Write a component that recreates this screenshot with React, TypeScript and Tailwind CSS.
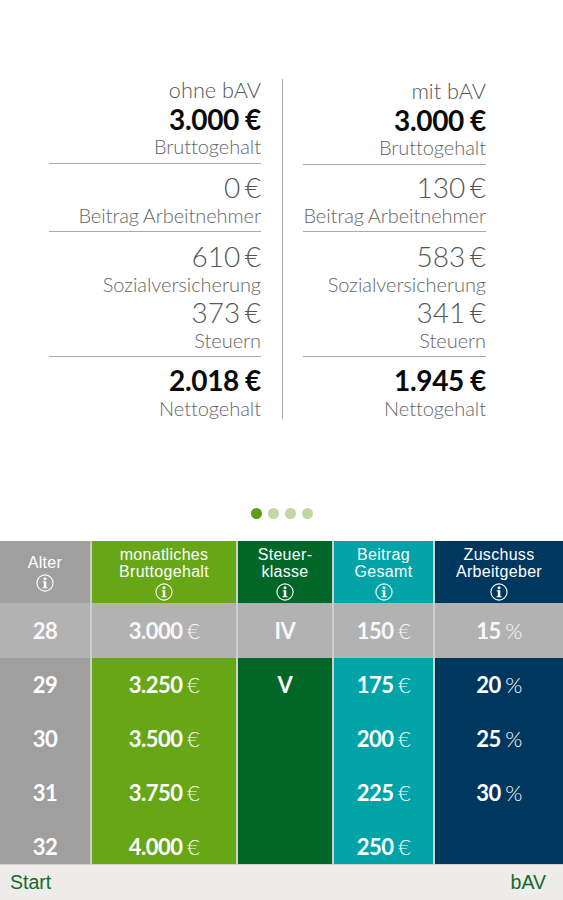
interface SalaryLine {
  amount: string;
  label: string;
}

interface Column {
  title: string[];
  unit?: string;
  values: string[];
  color: string;
  titlePadding: string;
}

const withoutBav: SalaryLine[] = [
  { amount: '3.000 €', label: 'Bruttogehalt' },
  { amount: '0 €', label: 'Beitrag Arbeitnehmer' },
  { amount: '610 €', label: 'Sozialversicherung' },
  { amount: '373 €', label: 'Steuern' },
  { amount: '2.018 €', label: 'Nettogehalt' },
];

const withBav: SalaryLine[] = [
  { amount: '3.000 €', label: 'Bruttogehalt' },
  { amount: '130 €', label: 'Beitrag Arbeitnehmer' },
  { amount: '583 €', label: 'Sozialversicherung' },
  { amount: '341 €', label: 'Steuern' },
  { amount: '1.945 €', label: 'Nettogehalt' },
];

const columns: Column[] = [
  { title: ['Alter'], values: ['28', '29', '30', '31', '32'], color: 'bg-[#9f9f9f]', titlePadding: 'pt-[13px]' },
  {
    title: ['monatliches', 'Bruttogehalt'],
    unit: '€',
    values: ['3.000', '3.250', '3.500', '3.750', '4.000'],
    color: 'bg-[#67a616]',
    titlePadding: 'pt-[5px]',
  },
  { title: ['Steuer-', 'klasse'], values: ['IV', 'V', '', '', ''], color: 'bg-[#006728]', titlePadding: 'pt-[5px]' },
  {
    title: ['Beitrag', 'Gesamt'],
    unit: '€',
    values: ['150', '175', '200', '225', '250'],
    color: 'bg-[#00a4a8]',
    titlePadding: 'pt-[5px]',
  },
  {
    title: ['Zuschuss', 'Arbeitgeber'],
    unit: '%',
    values: ['15', '20', '25', '30', ''],
    color: 'bg-[#00375f]',
    titlePadding: 'pt-[5px]',
  },
];

function Amount({ line, bold = false, labelHeight = 'h-[22px] leading-[22px]' }: { line: SalaryLine; bold?: boolean; labelHeight?: string }) {
  return (
    <>
      <div
        className={`h-[34px] text-[28px] leading-[34px] ${
          bold ? 'font-bold tracking-[-0.3px] text-[#0a0a0a] [word-spacing:-0.5px]' : 'font-light text-[#555] [word-spacing:-3px]'
        }`}
      >
        {line.amount}
      </div>
      <div className={`text-[20px] font-light text-[#666] tracking-[-0.05px] [word-spacing:-1px] ${labelHeight}`}>{line.label}</div>
    </>
  );
}

function SalaryColumn({ title, lines, className, titleClass, secondPadding }: {
  title: string;
  lines: SalaryLine[];
  className: string;
  titleClass: string;
  secondPadding: string;
}) {
  return (
    <section className={`text-right whitespace-nowrap ${className}`}>
      <div className="border-b border-[#aaa] pb-[7px]">
        <h2 className={`text-[21.7px] leading-[25px] font-light text-[#555] ${titleClass}`}>{title}</h2>
        <Amount line={lines[0]} bold labelHeight="h-[20px] leading-[20px]" />
      </div>
      <div className={`border-b border-[#aaa] pb-[5px] ${secondPadding}`}>
        <Amount line={lines[1]} />
      </div>
      <div className="border-b border-[#aaa] pt-[7px] pb-[5px]">
        <Amount line={lines[2]} />
        <Amount line={lines[3]} />
      </div>
      <div className="pt-[6px]">
        <Amount line={lines[4]} bold />
      </div>
    </section>
  );
}

function InfoIcon() {
  return (
    <svg className="mt-[3px] h-[18px] w-[18px]" viewBox="0 0 18 18" fill="none" aria-hidden="true">
      <circle cx="9" cy="9" r="8.1" stroke="currentColor" strokeWidth="1.1" />
      <circle cx="9" cy="4.7" r="1.5" fill="currentColor" />
      <path d="M6.7 7.2h3.6v6h1.3v1.1H6.5v-1.1h1.3V8.3H6.7z" fill="currentColor" />
    </svg>
  );
}

function PickerColumn({ column }: { column: Column }) {
  return (
    <div className={`overflow-hidden text-white ${column.color}`}>
      <div
        className={`flex h-[62px] flex-col items-center font-['Liberation_Sans',Arial,sans-serif] text-[16px] leading-[17px] tracking-[0.3px] ${column.titlePadding}`}
      >
        {column.title.map((word) => (
          <span key={word}>{word}</span>
        ))}
        <InfoIcon />
      </div>
      {column.values.map((value, index) => (
        <div
          key={index}
          className={`flex items-baseline justify-center text-[22px] whitespace-pre [word-spacing:-1px] ${
            index === 0 ? 'h-[55px] bg-[#b2b2b2] leading-[55px] text-[#f8f8f8]' : 'h-[54px] leading-[54px]'
          }`}
        >
          <span className="font-bold tracking-[-0.5px]">{value}</span>
          {value && column.unit && <span className="font-light tracking-[-0.5px]"> {column.unit}</span>}
        </div>
      ))}
    </div>
  );
}

export default function App() {
  return (
    <div className="flex h-[900px] w-[563px] flex-col overflow-hidden bg-white font-['Lato',sans-serif]">
      <main className="flex h-[508px] shrink-0 pt-[78px] pl-[49px]">
        <SalaryColumn title="ohne bAV" lines={withoutBav} className="w-[212px]" titleClass="h-[24px]" secondPadding="pt-[6px]" />
        <div className="mt-px ml-[21px] h-[340px] w-px bg-[#aaa]" />
        <SalaryColumn title="mit bAV" lines={withBav} className="ml-[20px] w-[183px]" titleClass="h-[25px] pt-px" secondPadding="pt-[5px]" />
      </main>

      <div className="flex h-[33px] shrink-0 gap-[6px] pl-[251px]">
        <span className="h-[11px] w-[11px] rounded-full bg-[#5c9f14]" />
        <span className="h-[11px] w-[11px] rounded-full bg-[#bfd9a0]" />
        <span className="h-[11px] w-[11px] rounded-full bg-[#bfd9a0]" />
        <span className="h-[11px] w-[11px] rounded-full bg-[#bfd9a0]" />
      </div>

      <div className="grid h-[323px] shrink-0 grid-cols-[90px_144px_94px_99px_128px] gap-x-[2px] overflow-hidden bg-[#c8d3c8]">
        {columns.map((column) => (
          <PickerColumn key={column.title[0]} column={column} />
        ))}
      </div>

      <footer className="flex h-[36px] shrink-0 items-center justify-between border-t border-[#d4d4d0] bg-[#edecea] pt-px pr-[17px] pl-[10px] font-['Liberation_Sans',Arial,sans-serif] text-[19.5px] text-[#146b2c]">
        <span>Start</span>
        <span>bAV</span>
      </footer>
    </div>
  );
}
